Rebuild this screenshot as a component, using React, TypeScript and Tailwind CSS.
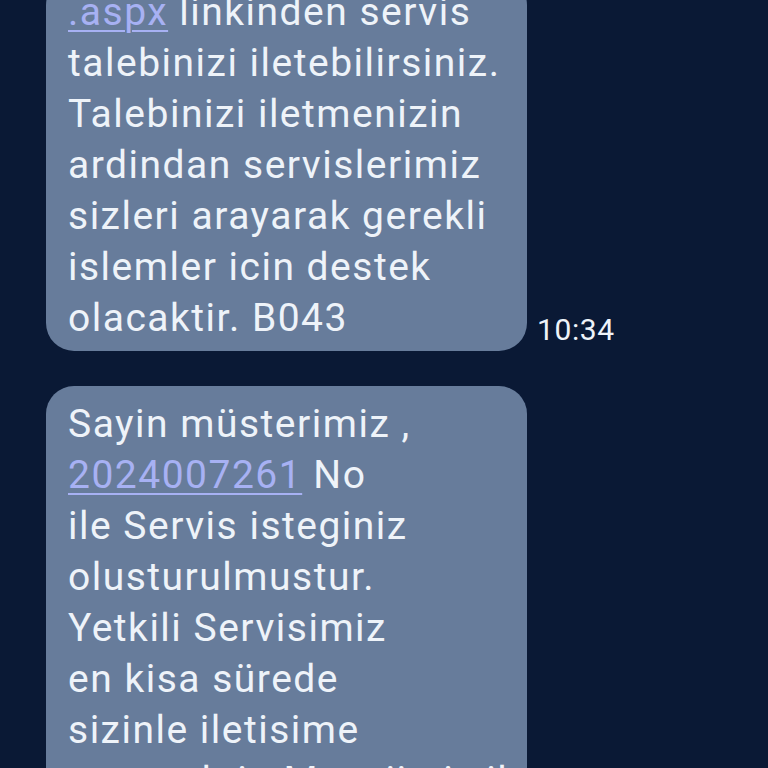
import React from 'react';

const first = [
  'linkinden servis',
  'talebinizi iletebilirsiniz.',
  'Talebinizi iletmenizin',
  'ardindan servislerimiz',
  'sizleri arayarak gerekli',
  'islemler icin destek',
  'olacaktir. B043',
];

const second = [
  'ile Servis isteginiz',
  'olusturulmustur.',
  'Yetkili Servisimiz',
  'en kisa sürede',
  'sizinle iletisime',
  'gececektir. Mesajimiz ile',
];

const Link = ({ children }: { children: React.ReactNode }) => (
  <span className="text-[#a7b1f3] underline decoration-[1.5px] underline-offset-[5px]">{children}</span>
);

export default function App() {
  return (
    <div className="h-[768px] w-[768px] overflow-hidden bg-[#0a1935] font-['Roboto',sans-serif] text-[39px] leading-[51px] tracking-[1.5px] text-[#eef3f9]">
      <div className="flex items-end pl-[46px] mt-[-23px]">
        <div className="w-[481px] shrink-0 rounded-[28px] bg-[#677c9b] pl-[22px] pr-2 pt-[10px] pb-[7px] whitespace-nowrap">
          <div>
            <Link>.aspx</Link> {first[0]}
          </div>
          {first.slice(1).map(line => (
            <div key={line}>{line}</div>
          ))}
        </div>
        <span className="ml-[10px] mb-[1px] text-[30px] leading-[40px] tracking-[0.6px] text-[#eef3f9]">10:34</span>
      </div>

      <div className="pl-[46px] mt-[35px]">
        <div className="w-[481px] rounded-[28px] bg-[#677c9b] pl-[22px] pr-2 pt-[13px] pb-8 whitespace-nowrap">
          <div>Sayin müsterimiz ,</div>
          <div>
            <Link>2024007261</Link> No
          </div>
          {second.map(line => (
            <div key={line}>{line}</div>
          ))}
        </div>
      </div>
    </div>
  );
}
